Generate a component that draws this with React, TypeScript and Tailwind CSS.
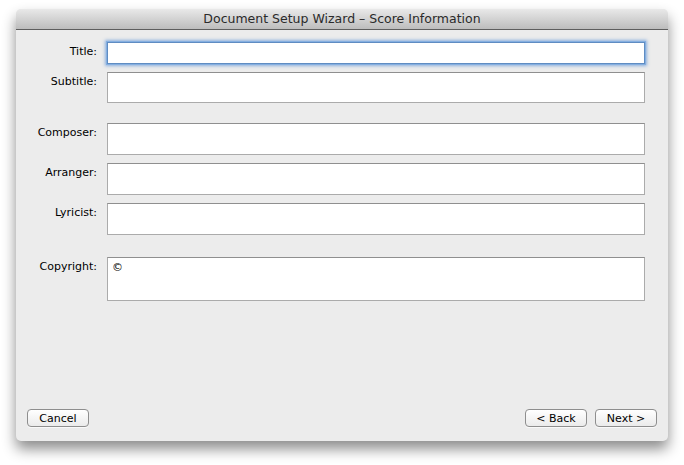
import React from 'react';

const fields = [
  { label: 'Title:', h: 'h-[22px]', mt: 'mt-[12px]', focus: true },
  { label: 'Subtitle:', h: 'h-[31px]', mt: 'mt-[8px]' },
  { label: 'Composer:', h: 'h-[32px]', mt: 'mt-[20px]' },
  { label: 'Arranger:', h: 'h-[32px]', mt: 'mt-[8px]' },
  { label: 'Lyricist:', h: 'h-[32px]', mt: 'mt-[8px]' },
  { label: 'Copyright:', h: 'h-[44px]', mt: 'mt-[22px]', value: '©' },
];

function MacButton({ children }: { children: React.ReactNode }) {
  return (
    <button className="h-[18px] w-[62px] rounded-[4px] border border-[#8e8e8e] bg-gradient-to-b from-white to-[#ebebeb] text-[11px] leading-none text-black shadow-[0_1px_0_rgba(255,255,255,0.7)]">
      {children}
    </button>
  );
}

export default function App() {
  return (
    <div className="h-[465px] w-[684px] bg-white pl-[16px] pt-[9px] font-['DejaVu_Sans',sans-serif]">
      <div className="flex h-[432px] w-[652px] flex-col rounded-[5px] bg-[#ececec] shadow-[0_8px_14px_rgba(0,0,0,0.45)]">
        {/* title bar */}
        <div className="flex h-[21px] items-center justify-center rounded-t-[5px] border-b border-[#5e5e5e] bg-gradient-to-b from-[#e9e9e9] to-[#bdbdbd] pt-[1px] text-[12.5px] text-[#2a2a2a]">
          Document Setup Wizard – Score Information
        </div>

        <div className="flex flex-col">
          {fields.map((f) => (
            <div key={f.label} className={`flex ${f.mt}`}>
              <div className="w-[81px] pt-[2px] text-right text-[11px] leading-[16px] text-black">{f.label}</div>
              <div
                className={`ml-[10px] w-[538px] ${f.h} bg-white px-[4px] pt-[3px] text-[11px] leading-[14px] ${
                  f.focus
                    ? 'border border-[#5f8cc2] shadow-[0_0_0_1px_#85afe0,0_0_3px_2px_rgba(100,150,215,0.7)]'
                    : 'border border-[#ababab] border-t-[#8f8f8f]'
                }`}
              >
                {f.value}
              </div>
            </div>
          ))}
        </div>

        <div className="mt-auto flex items-center px-[11px] pb-[14px]">
          <MacButton>Cancel</MacButton>
          <div className="flex-1" />
          <div className="flex gap-[8px]">
            <MacButton>&lt; Back</MacButton>
            <MacButton>Next &gt;</MacButton>
          </div>
        </div>
      </div>
    </div>
  );
}
